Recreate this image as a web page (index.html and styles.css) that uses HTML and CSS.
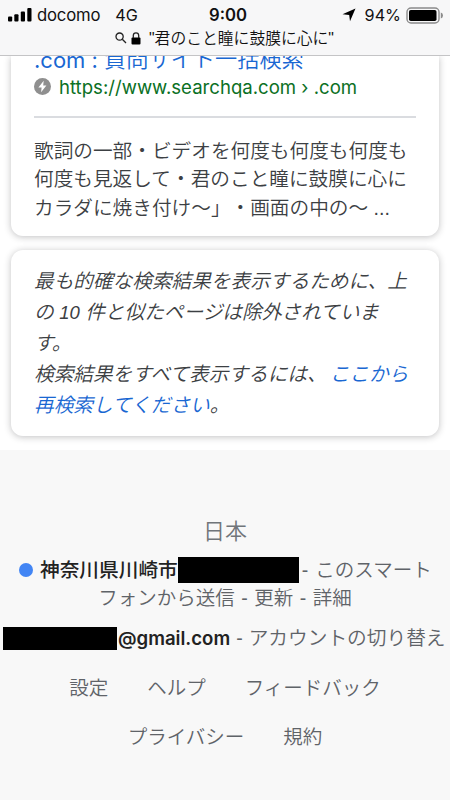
FILE: index.html
```html
<!DOCTYPE html>
<html lang="ja">

<head>
  <meta charset="UTF-8" />
  <meta name="viewport" content="width=device-width, initial-scale=1.0" />
  <title>"君のこと瞳に鼓膜に心に"</title>
  <link rel="stylesheet" href="styles.css">
</head>

<body>

  <header class="topbar">
    <div class="status">
      <div class="status-left">
        <svg class="signal" width="24" height="14" viewBox="0 0 24 14">
          <rect x="0" y="8.5" width="4.2" height="5" rx="1" />
          <rect x="6.3" y="6.3" width="4.2" height="7.2" rx="1" />
          <rect x="12.8" y="3.5" width="4.2" height="10" rx="1" />
          <rect x="19.3" y="0" width="4.2" height="13.5" rx="1" />
        </svg>
        <span class="carrier">docomo</span>
        <span class="network">4G</span>
      </div>
      <span class="clock">9:00</span>
      <div class="status-right">
        <svg class="location" width="14" height="14" viewBox="0 0 14 14">
          <path d="M13.5 0.5 L8 13.2 L7.2 7 L0.5 6.3 Z" />
        </svg>
        <span class="percent">94%</span>
        <svg class="battery" width="38" height="17" viewBox="0 0 38 17">
          <rect class="battery-frame" x="1" y="1" width="32" height="15" rx="4" />
          <rect x="3" y="3" width="27.5" height="11" rx="1.8" />
          <path class="battery-tip" d="M34.8 5.5 Q37 6.2 37 8.5 Q37 10.8 34.8 11.5 Z" />
        </svg>
      </div>
    </div>
    <div class="query">
      <svg width="12" height="12" viewBox="0 0 12 12">
        <circle class="lens" cx="4.6" cy="4.6" r="3.6" />
        <path class="lens" d="M7.3 7.3 L11 11" />
      </svg>
      <svg class="lock" width="10" height="13" viewBox="0 0 10 13">
        <rect x="0.5" y="5.6" width="9" height="7" rx="1" />
        <path class="shackle" d="M2.3 6 V3.5 A2.7 2.7 0 0 1 7.7 3.5 V6" />
      </svg>
      <span class="query-text">"君のこと瞳に鼓膜に心に"</span>
    </div>
  </header>

  <main class="results">
    <article class="card result">
      <h3 class="title"><span class="title-latin">.com : </span>質問サイト一括検索</h3>
      <div class="url">
        <svg width="17" height="17" viewBox="0 0 17 17">
          <circle cx="8.5" cy="8.5" r="8.5" fill="#8f8f8f" />
          <path d="M9.7 2.8 L4.4 9.6 H7.6 L7.1 14.2 L12.4 7.4 H9.2 Z" fill="#fff" />
        </svg>
        <span class="url-text">https://www.searchqa.com › .com</span>
      </div>
      <p class="snippet">歌詞の一部・ビデオを何度も何度も何度も<br>何度も見返して・君のこと瞳に鼓膜に心に<br>カラダに焼き付け〜」・画面の中の〜 ...</p>
    </article>

    <article class="card omitted">
      <p>最も的確な検索結果を表示するために、上<br>の <span class="num">10</span> 件と似たページは除外されていま<br>す。<br>検索結果をすべて表示するには、<a class="link first">ここから</a><br><a class="link">再検索してください</a>。</p>
    </article>
  </main>

  <footer class="footer">
    <div class="country">日本</div>
    <div class="place">
      <span class="dot"></span><b>神奈川県川崎市</b><span class="mask mask-place"></span><span class="dash">-</span><span>このスマート</span>
    </div>
    <div class="place-more">フォンから送信 - 更新 - 詳細</div>
    <div class="account">
      <span class="mask mask-mail"></span><b class="mail">@gmail.com</b><span class="dash dash-mail">-</span><span>アカウントの切り替え</span>
    </div>
    <div class="links links-first">
      <a>設定</a>
      <a>ヘルプ</a>
      <a>フィードバック</a>
    </div>
    <div class="links links-second">
      <a>プライバシー</a>
      <a>規約</a>
    </div>
  </footer>

</body>

</html>
```
FILE: styles.css
```css
* {
  box-sizing: border-box;
}
body {
  margin: 0;
  width: 450px;
  height: 800px;
  overflow: hidden;
  display: flex;
  flex-direction: column;
  background: #fff;
  font-family: "Liberation Sans", "Noto Sans CJK JP", sans-serif;
  font-weight: 350;
  text-spacing-trim: space-all;
  white-space: nowrap;
}
svg {
  display: block;
  flex: none;
}

/* status bar */
.topbar {
  height: 56px;
  flex: none;
  background: #f7f7f8;
  border-bottom: 1px solid #c4c4c6;
  color: #111;
}
.status {
  height: 28px;
  padding: 2px 7px 0 8px;
  display: grid;
  grid-template-columns: 1fr auto 1fr;
  align-items: center;
  font-family: Inter, sans-serif;
  font-weight: 400;
}
.status-left, .status-right {
  display: flex;
  align-items: center;
}
.status-right {
  justify-content: flex-end;
}
.carrier {
  margin-left: 5px;
  font-size: 16.7px;
  letter-spacing: -0.2px;
}
.network {
  margin-left: 15px;
  font-size: 16.2px;
}
.clock {
  font-weight: 600;
  font-size: 16.7px;
  margin-left: 5px;
}
.location {
  margin-right: 9px;
}
.percent {
  font-size: 16.2px;
  margin-right: 5px;
}
.battery {
  margin-right: -1px;
}
.battery-frame {
  fill: none;
  stroke: #8b8b8b;
  stroke-width: 1.4;
}
.battery-tip {
  fill: #8b8b8b;
}
.query {
  height: 20px;
  display: flex;
  align-items: center;
  padding-left: 115px;
}
.lens, .shackle {
  fill: none;
  stroke: #222;
  stroke-width: 1.3;
}
.lock {
  margin-left: 4px;
}
.query-text {
  margin-left: 8px;
  font-size: 15.8px;
  line-height: 18px;
  padding-top: 2px;
}

/* results */
.results {
  height: 394px;
  flex: none;
  overflow: hidden;
  padding: 0 11px;
}
.card {
  background: #fff;
  box-shadow: 0 1px 7px rgba(32, 33, 36, 0.28);
  color: #3c4043;
  font-size: 19.67px;
  padding: 0 23px;
}
.result {
  height: 180px;
  border-radius: 0 0 12px 12px;
}
.title {
  margin: 0;
  height: 20px;
  display: flex;
  align-items: flex-end;
  overflow: hidden;
  color: #1967d2;
  font-size: 22.2px;
  font-weight: 350;
  line-height: 32px;
  white-space: pre;
}
.title-latin {
  font-family: Inter, sans-serif;
  font-size: 22px;
  font-weight: 400;
}
.url {
  height: 42px;
  padding-bottom: 20px;
  display: flex;
  align-items: center;
  border-bottom: 2px solid #dadce0;
  color: #0b7024;
}
.url-text {
  margin-left: 8px;
  padding-top: 1px;
  font-family: Inter, sans-serif;
  font-size: 18.6px;
  font-weight: 400;
}
.snippet {
  margin: 19px 0 0;
  line-height: 28.3px;
}
.omitted {
  height: 186px;
  margin-top: 14px;
  padding-top: 16px;
  border-radius: 12px;
}
.omitted p {
  margin: 0;
  font-style: italic;
  line-height: 31px;
}
.num {
  font-size: 18.5px;
}
.link {
  color: #1967d2;
}
.link.first {
  margin-left: 3px;
}

/* footer */
.footer {
  flex: 1;
  background: #f8f8f8;
  color: #5f6368;
  font-size: 19.5px;
  text-align: center;
  padding-top: 65px;
}
.country {
  height: 34px;
  line-height: 34px;
  font-size: 22px;
  color: #70757a;
}
.place, .account {
  display: flex;
  align-items: center;
  line-height: 26px;
}
.place {
  height: 28px;
  margin-top: 7px;
  padding-left: 19px;
}
.place b, .account b {
  color: #222;
  font-weight: 500;
}
.place b {
  font-size: 19.7px;
}
.dot {
  width: 14px;
  height: 14px;
  margin-right: 7px;
  border-radius: 50%;
  background: #4285f4;
}
.mask {
  background: #000;
}
.mask-place {
  width: 121px;
  height: 26px;
}
.mask-mail {
  width: 114px;
  height: 23px;
}
.dash {
  margin: 0 7px 0 3px;
}
.place-more {
  height: 28px;
  line-height: 28px;
  word-spacing: 1.1px;
}
.account {
  height: 28px;
  margin-top: 12px;
  padding-left: 3px;
}
.account .mail {
  font-family: Inter, sans-serif;
  font-size: 18.6px;
  font-weight: 600;
  margin-left: 1px;
}
.account .dash-mail {
  margin: 0 6px;
}
.account span:last-child {
  font-size: 19.7px;
}
.links {
  height: 28px;
  line-height: 28px;
  display: flex;
  justify-content: center;
  gap: 39px;
}
.links-first {
  margin-top: 22px;
}
.links-second {
  margin-top: 21px;
}
```
